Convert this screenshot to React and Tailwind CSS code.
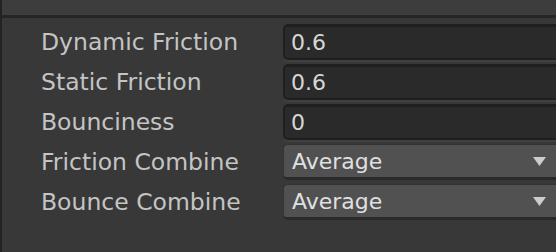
import React from 'react';

const rows = [
  { label: 'Dynamic Friction', value: '0.6', kind: 'field' },
  { label: 'Static Friction', value: '0.6', kind: 'field' },
  { label: 'Bounciness', value: '0', kind: 'field' },
  { label: 'Friction Combine', value: 'Average', kind: 'select' },
  { label: 'Bounce Combine', value: 'Average', kind: 'select' },
];

function FieldBox({ value }) {
  return (
    <div className="flex-1 h-[36px] rounded-l-[5px] bg-[#2a2a2a] border-t-[3px] border-l-2 border-b-[2px] border-[#1f1f1f] shadow-[0_2px_0_#414141] flex items-center pl-[6px] text-[22px] text-[#d6d6d6]">
      {value}
    </div>
  );
}

function SelectBox({ value }) {
  return (
    <div className="flex-1 h-[36px] rounded-l-[5px] bg-[#515151] border-t border-l border-b-[3px] border-t-[#333] border-l-[#333] border-b-[#2a2a2a] flex items-center justify-between pl-[8px] pr-[10px] text-[22px] text-[#e0e0e0]">
      <span>{value}</span>
      <svg width="13" height="9" viewBox="0 0 13 9">
        <path d="M0 0 H13 L6.5 9 Z" fill="#cdcdcd" />
      </svg>
    </div>
  );
}

export default function App() {
  return (
    <div className="w-[556px] h-[252px] bg-[#383838] flex overflow-hidden font-['DejaVu_Sans',sans-serif] text-[23.5px]">
      <div className="w-[2px] bg-[#232323]" />
      <div className="flex-1 flex flex-col">
        <div className="h-[15px] bg-[#3d3d3d]" />
        <div className="h-[3px] bg-[#262626]" />
        <div className="flex flex-col gap-[4px] pt-[6px]">
          {rows.map((r) => (
            <div key={r.label} className="flex items-center">
              <div className="w-[281px] pl-[39px] pt-[2px] text-[#c4c4c4] leading-none">{r.label}</div>
              {r.kind === 'field' ? <FieldBox value={r.value} /> : <SelectBox value={r.value} />}
            </div>
          ))}
        </div>
      </div>
    </div>
  );
}
